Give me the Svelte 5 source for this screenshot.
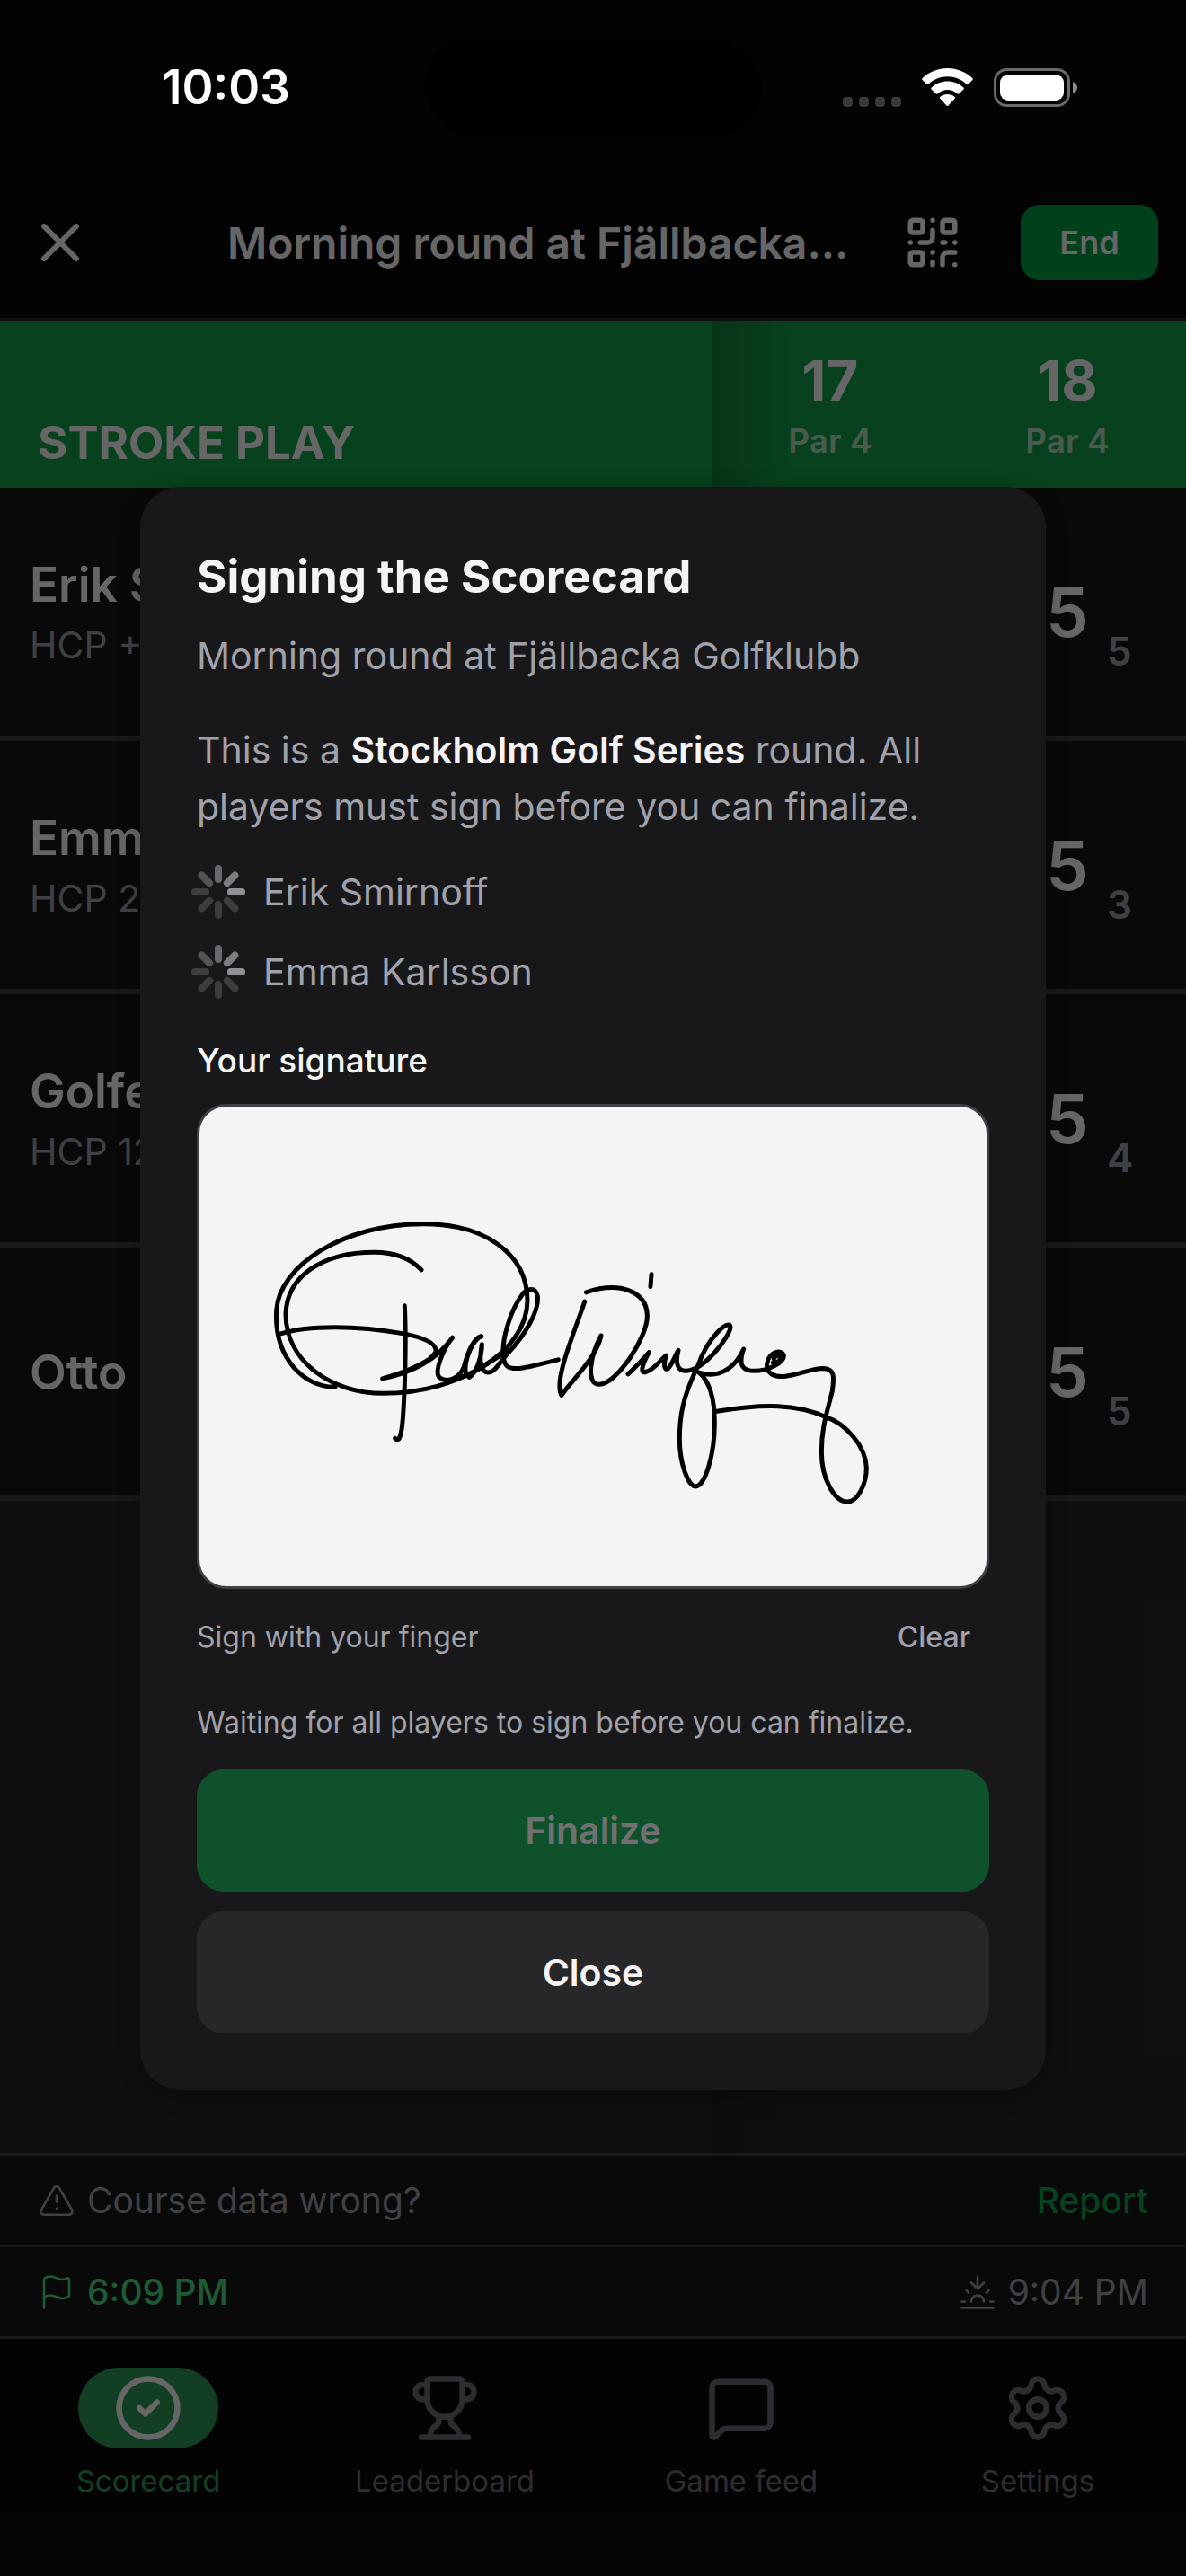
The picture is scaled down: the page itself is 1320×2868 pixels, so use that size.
<script>
const holes = [
    { number: 17, par: 4 },
    { number: 18, par: 4 }
];

const players = [
    { name: 'Erik Smirnoff', hcp: '+2', score: 5, points: 5 },
    { name: 'Emma Karlsson', hcp: '24', score: 5, points: 3 },
    { name: 'Golfer', hcp: '12', score: 5, points: 4 },
    { name: 'Otto', hcp: null, score: 5, points: 5 }
];

const tabs = [
    { id: 'scorecard', label: 'Scorecard' },
    { id: 'leaderboard', label: 'Leaderboard' },
    { id: 'feed', label: 'Game feed' },
    { id: 'settings', label: 'Settings' }
];

// spinner spokes, clockwise from the top
const spokes = ['#68686e', '#7c7c82', '#8f8f96', '#3d3d40', '#3d3d40', '#3d3d40', '#3d3d40', '#525257'];

let activeTab = $state('scorecard');
let dialogOpen = $state(true);
let signed = $state(true);

const waitingFor = ['Erik Smirnoff', 'Emma Karlsson'];
</script>

<div class="screen">
    <div class="status-bar">
        <span class="time">10:03</span>
        <span class="island"></span>
        <div class="status-icons">
            <span class="dots"><i></i><i></i><i></i><i></i></span>
            <svg class="wifi" viewBox="0 0 57 42">
                <path d="M28.5 0C39 0 49 4 56.3 11c.7.7.7 1.4.1 2L51.8 17.600c-.7.7-1.5.7-2.2.1C44 12.400 36.5 9.300 28.5 9.300S13 12.400 7.400 17.700c-.7.6-1.5.6-2.2-.1L.6 13c-.6-.6-.6-1.3.1-2C8 4 18 0 28.5 0Z" />
                <path d="M28.5 14.500c6.700 0 13 2.500 17.800 7 .7.7.7 1.400.1 2L41.500 28.200c-.7.7-1.500.7-2.200.1-3-2.700-6.800-4.200-10.800-4.200s-7.800 1.500-10.800 4.200c-.7.6-1.500.6-2.200-.1l-4.900-4.700c-.6-.6-.6-1.300.1-2 4.800-4.500 11.100-7 17.800-7Z" />
                <path d="M28.5 29c3 0 5.800 1 8 2.800.8.7.8 1.400.2 2l-7.200 7.600c-.6.7-1.400.7-2 0l-7.200-7.600c-.6-.6-.6-1.300.2-2C22.700 30 25.500 29 28.500 29Z" />
            </svg>
            <svg class="battery" viewBox="0 0 94 43">
                <rect x="1.5" y="1.5" width="82" height="40" rx="13" stroke="#6a6a6a" stroke-width="3" />
                <rect x="7" y="7" width="71" height="29" rx="9" fill="#fff" />
                <path d="M88 15c3 1 5 3.500 5 6.500s-2 5.500-5 6.500Z" fill="#8a8a8a" />
            </svg>
        </div>
    </div>

    <header class="top-bar">
        <button class="icon-button" aria-label="Leave round">
            <svg class="icon-close" viewBox="0 0 24 24"><path d="M18 6 6 18M6 6l12 12" /></svg>
        </button>
        <h1>Morning round at Fjällbacka...</h1>
        <button class="icon-button" aria-label="Show QR code">
            <svg class="icon-qr" viewBox="0 0 24 24">
                <rect width="5" height="5" x="3" y="3" rx="1" />
                <rect width="5" height="5" x="16" y="3" rx="1" />
                <rect width="5" height="5" x="3" y="16" rx="1" />
                <path d="M21 16h-3a2 2 0 0 0-2 2v3M21 21v.01M12 7v3a2 2 0 0 1-2 2H7M3 12h.01M12 3h.01M12 16v.01M16 12h1M21 12v.01M12 21v-1" />
            </svg>
        </button>
        <button class="end-button">End</button>
    </header>

    <main>
        <table>
            <thead>
                <tr>
                    <th class="format" scope="col">STROKE PLAY</th>
                    {#each holes as hole}
                        <th class="hole" scope="col">
                            <span class="hole-number">{hole.number}</span>
                            <span class="hole-par">Par {hole.par}</span>
                        </th>
                    {/each}
                </tr>
            </thead>
            <tbody>
                {#each players as player}
                    <tr>
                        <th class="player" scope="row">
                            <span class="player-name">{player.name}</span>
                            {#if player.hcp}
                                <span class="player-hcp">HCP {player.hcp}</span>
                            {/if}
                        </th>
                        <td></td>
                        <td>
                            <div class="score">
                                <span class="strokes">{player.score}</span>
                                <span class="points">{player.points}</span>
                            </div>
                        </td>
                    </tr>
                {/each}
            </tbody>
        </table>
        <div class="column-shadow"></div>
    </main>

    <div class="info-row">
        <span class="info-item">
            <svg viewBox="0 0 24 24"><path d="m21.73 18-8-14a2 2 0 0 0-3.48 0l-8 14A2 2 0 0 0 4 21h16a2 2 0 0 0 1.73-3M12 9v4M12 17h.01" /></svg>
            Course data wrong?
        </span>
        <a class="report" href="#report">Report</a>
    </div>
    <div class="info-row">
        <span class="info-item start">
            <svg viewBox="0 0 24 24"><path d="M4 22V4a1 1 0 0 1 .4-.8A6 6 0 0 1 8 2c3 0 5 2 7.333 2q2 0 3.067-.8A1 1 0 0 1 20 4v10a1 1 0 0 1-.4.8A6 6 0 0 1 16 16c-3 0-5-2-8-2a6 6 0 0 0-4 1.528" /></svg>
            6:09 PM
        </span>
        <span class="info-item">
            <svg viewBox="0 0 24 24"><path d="M12 10V2M4.93 10.93l1.41 1.41M2 18h2M20 18h2M19.07 10.93l-1.41 1.41M22 22H2M16 6l-4 4-4-4M16 18a4 4 0 0 0-8 0" /></svg>
            9:04 PM
        </span>
    </div>

    <nav>
        {#each tabs as tab}
            <button class="tab" class:active={activeTab === tab.id} onclick={() => (activeTab = tab.id)}>
                <span class="tab-icon">
                    <svg viewBox="0 0 24 24">
                        {#if tab.id === 'scorecard'}
                            <circle cx="12" cy="12" r="10" />
                            <path d="m9 12 2 2 4-4" />
                        {:else if tab.id === 'leaderboard'}
                            <path d="M10 14.66v1.626a2 2 0 0 1-.976 1.696A5 5 0 0 0 7 21.978M14 14.66v1.626a2 2 0 0 0 .976 1.696A5 5 0 0 1 17 21.978M18 9h1.5a2.5 2.5 0 0 0 0-5H18M4 22h16M6 9a6 6 0 0 0 12 0V3a1 1 0 0 0-1-1H7a1 1 0 0 0-1 1zM6 9H4.5a2.5 2.5 0 0 1 0-5H6" />
                        {:else if tab.id === 'feed'}
                            <path d="M22 17a2 2 0 0 1-2 2H6.828a2 2 0 0 0-1.414.586l-2.202 2.202A.71.71 0 0 1 2 21.286V5a2 2 0 0 1 2-2h16a2 2 0 0 1 2 2z" />
                        {:else}
                            <path d="M9.671 4.136a2.34 2.34 0 0 1 4.659 0 2.34 2.34 0 0 0 3.319 1.915 2.34 2.34 0 0 1 2.33 4.033 2.34 2.34 0 0 0 0 3.831 2.34 2.34 0 0 1-2.33 4.033 2.34 2.34 0 0 0-3.319 1.915 2.34 2.34 0 0 1-4.659 0 2.34 2.34 0 0 0-3.32-1.915 2.34 2.34 0 0 1-2.33-4.033 2.34 2.34 0 0 0 0-3.831A2.34 2.34 0 0 1 6.35 6.051a2.34 2.34 0 0 0 3.319-1.915" />
                            <circle cx="12" cy="12" r="3" />
                        {/if}
                    </svg>
                </span>
                {tab.label}
            </button>
        {/each}
    </nav>

    {#if dialogOpen}
        <div class="backdrop">
            <div class="dialog" role="dialog" aria-modal="true" aria-labelledby="dialog-title">
                <h2 id="dialog-title">Signing the Scorecard</h2>
                <p class="round-name">Morning round at Fjällbacka Golfklubb</p>
                <p class="intro">This is a <strong>Stockholm Golf Series</strong> round. All players must sign before you can finalize.</p>

                <ul>
                    {#each waitingFor as name}
                        <li>
                            <svg class="spinner" viewBox="-30 -30 60 60">
                                {#each spokes as color, i}
                                    <line x1="0" y1="-14" x2="0" y2="-26" stroke={color} transform="rotate({i * 45})" />
                                {/each}
                            </svg>
                            {name}
                        </li>
                    {/each}
                </ul>

                <h3>Your signature</h3>
                <div class="pad">
                    {#if signed}
                        <svg viewBox="37 64 2628 1495" preserveAspectRatio="none">
                            <path d="M490 938C390 940 285 850 294 700C302 560 520 430 780 430C985 428 1132 520 1132 670C1130 830 900 958 650 958C480 958 325 860 325 710C330 590 450 518 620 518C690 518 745 540 778 573" />
                            <path d="M308 772C400 745 560 745 720 772C790 785 830 803 826 828C815 855 740 888 648 912C760 890 830 850 882 784C850 820 820 890 838 908C870 930 908 905 920 875C930 840 950 785 978 780" />
                            <path d="M978 780C940 795 905 895 938 908C965 890 980 840 980 805C972 850 972 890 1000 893C1025 893 1040 860 1065 835C1125 775 1172 700 1166 655C1160 625 1130 630 1115 650C1075 700 1045 790 1052 845C1056 880 1075 882 1105 880C1150 876 1190 862 1235 853" />
                            <path d="M870 920C940 905 1000 865 1065 825M722 685C728 800 722 950 718 1010C714 1080 706 1115 690 1098" />
                            <g transform="translate(1170)">
                                <path d="M153 672C118 770 48 920 76 964C110 915 192 850 208 778C172 840 155 930 202 930C260 930 365 780 362 715C360 640 270 608 158 643" />
                                <path d="M376 587L373 625" />
                                <path d="M298 898C330 870 350 850 368 830C350 860 335 895 355 892C385 885 405 855 425 840C415 870 420 885 430 882C445 870 455 840 466 824C455 860 462 888 490 888C550 888 640 780 640 750C636 725 565 780 530 875C480 970 470 1030 470 1100C470 1180 500 1248 523 1248C555 1248 587 1150 587 1050C587 970 570 920 535 893C610 915 660 870 684 820C665 870 680 888 720 888C770 888 820 860 818 840C812 820 770 825 762 865C758 895 785 907 820 905C870 900 910 880 950 880C985 882 988 900 980 950C965 1010 944 1060 944 1140C944 1230 990 1296 1030 1296C1065 1296 1094 1240 1094 1190C1092 1120 1020 1050 960 1032C860 990 750 990 595 1014" />
                                <path d="M785 850C790 838 808 838 808 846C806 858 790 864 782 862" />
                            </g>
                        </svg>
                    {/if}
                </div>
                <div class="pad-footer">
                    <span>Sign with your finger</span>
                    <button class="clear" onclick={() => (signed = false)}>Clear</button>
                </div>

                <p class="waiting">Waiting for all players to sign before you can finalize.</p>
                <div class="actions">
                    <button class="finalize" disabled>Finalize</button>
                    <button class="close" onclick={() => (dialogOpen = false)}>Close</button>
                </div>
            </div>
        </div>
    {/if}
</div>

<style>
    :global(body) {
        margin: 0;
        background: #09090b;
    }
    .screen {
        position: relative;
        display: flex;
        flex-direction: column;
        min-height: 100vh;
        background: #09090b;
        color: #fff;
        font-family: Inter, "Liberation Sans", sans-serif;
        font-size: 41px;
    }
    h1, h2, h3, p, ul {
        margin: 0;
        padding: 0;
    }
    button {
        border: 0;
        padding: 0;
        background: none;
        color: inherit;
        font: inherit;
        cursor: pointer;
    }
    svg {
        display: block;
        flex: none;
        fill: none;
        stroke: currentColor;
        stroke-width: 2;
        stroke-linecap: round;
        stroke-linejoin: round;
    }

    /* status bar stays above the backdrop */
    .status-bar {
        position: relative;
        z-index: 2;
        display: grid;
        grid-template-columns: 1fr 374px 1fr;
        align-items: center;
        box-sizing: border-box;
        height: 186px;
        padding: 42px 0 34px;
    }
    .time {
        padding-left: 180px;
        font-size: 53px;
        font-weight: 600;
    }
    .island {
        height: 110px;
        border-radius: 55px;
        background: #000;
    }
    .status-icons {
        display: flex;
        justify-content: flex-end;
        align-items: center;
        gap: 23px;
        padding-right: 120px;
    }
    .status-icons svg {
        stroke: none;
    }
    .dots {
        display: flex;
        align-self: flex-end;
        gap: 7px;
    }
    .dots i {
        width: 11px;
        height: 11px;
        border-radius: 4px;
        background: #3a3a3a;
    }
    .wifi {
        width: 57px;
        height: 42px;
        fill: #fff;
    }
    .battery {
        width: 94px;
        height: 43px;
    }

    .top-bar {
        display: flex;
        align-items: center;
        height: 168px;
        padding: 0 31px;
        border-bottom: 3px solid #27272a;
    }
    .icon-close {
        width: 72px;
        height: 72px;
    }
    .icon-qr {
        width: 66px;
        height: 66px;
    }
    h1 {
        flex: 1;
        margin: 0 32px 0 150px;
        white-space: nowrap;
        font-size: 48px;
        font-weight: 600;
    }
    .end-button {
        width: 153px;
        height: 84px;
        margin-left: 65px;
        border-radius: 21px;
        background: #00a144;
        font-size: 36px;
        font-weight: 600;
    }

    main {
        position: relative;
        flex: 1;
        background: #27272a;
    }
    table {
        width: 100%;
        border-collapse: collapse;
        table-layout: fixed;
    }
    th, td {
        padding: 0;
        text-align: left;
        font-weight: 400;
    }
    thead tr {
        height: 186px;
        background: #16a34a;
    }
    .format {
        width: 60%;
        box-sizing: border-box;
        padding: 0 42px 20px;
        vertical-align: bottom;
        font-size: 51px;
        font-weight: 700;
    }
    .hole {
        padding-top: 10px;
        text-align: center;
    }
    .hole span {
        display: block;
    }
    .hole-number {
        font-size: 62px;
        line-height: 72px;
        font-weight: 700;
    }
    .hole-par {
        color: rgba(255, 255, 255, 0.7);
        font-size: 37px;
        line-height: 62px;
        font-weight: 600;
    }
    tbody tr {
        height: 282px;
        background: #18181b;
        box-shadow: inset 0 -6px #3f3f46;
    }
    .player {
        padding: 0 33px 4px;
    }
    .player span {
        display: block;
    }
    .player-name {
        font-size: 53px;
        line-height: 72px;
        font-weight: 600;
    }
    .player-hcp {
        color: #a1a1aa;
        line-height: 62px;
    }
    .score {
        display: grid;
        grid-template-columns: 1fr auto 1fr;
        align-items: center;
        gap: 20px;
        height: 132px;
        padding-bottom: 6px;
    }
    .strokes {
        grid-column: 2;
        font-size: 76px;
        line-height: 132px;
        font-weight: 600;
    }
    .points {
        align-self: end;
        color: #a1a1aa;
        font-size: 44px;
        line-height: 44px;
        font-weight: 600;
    }
    .column-shadow {
        position: absolute;
        top: 0;
        bottom: 0;
        left: 60%;
        width: 90px;
        background: linear-gradient(to right, rgba(0, 0, 0, 0.2), transparent);
    }

    .info-row {
        display: flex;
        justify-content: space-between;
        align-items: center;
        height: 99px;
        padding: 0 42px;
        border-top: 3px solid #3f3f46;
        background: #18181b;
        color: #a1a1aa;
        font-size: 39px;
    }
    .info-item {
        display: flex;
        align-items: center;
        gap: 13px;
    }
    .info-item svg {
        width: 42px;
        height: 42px;
        stroke-width: 1.5;
    }
    .start {
        color: #4ade80;
        font-weight: 500;
    }
    .report {
        color: #16a34a;
        font-weight: 500;
        text-decoration: none;
    }

    nav {
        display: grid;
        grid-template-columns: repeat(4, 1fr);
        box-sizing: border-box;
        height: 267px;
        padding-top: 32px;
        border-top: 3px solid #3f3f46;
    }
    .tab {
        display: flex;
        flex-direction: column;
        align-items: center;
        gap: 12px;
        color: #71717a;
        font-size: 33px;
        line-height: 48px;
    }
    .tab-icon {
        display: flex;
        justify-content: center;
        align-items: center;
        width: 156px;
        height: 90px;
        border-radius: 45px;
    }
    .tab-icon svg {
        width: 78px;
        height: 78px;
    }
    .active {
        color: #2f9e5a;
    }
    .active .tab-icon {
        background: #2f9e5a;
        color: #fff;
    }

    .backdrop {
        position: absolute;
        inset: 0;
        display: flex;
        justify-content: center;
        align-items: center;
        padding: 0 156px;
        background: rgba(0, 0, 0, 0.6);
    }
    .dialog {
        flex: 1;
        max-width: 1008px;
        box-sizing: border-box;
        padding: 63px;
        border-radius: 45px;
        background: #18181b;
        color: #a1a1aa;
        box-shadow: 0 6px 24px rgba(0, 0, 0, 0.25);
    }
    h2 {
        color: #f4f4f5;
        font-size: 51px;
        line-height: 73px;
        font-weight: 700;
    }
    .round-name {
        margin-top: 24px;
        line-height: 57px;
    }
    .intro {
        margin-top: 45px;
        line-height: 63px;
    }
    strong {
        color: #f4f4f5;
        font-weight: 600;
    }
    ul {
        display: grid;
        gap: 29px;
        margin-top: 33px;
        list-style: none;
    }
    li {
        display: flex;
        align-items: center;
        gap: 20px;
        height: 60px;
        margin-left: -6px;
    }
    .spinner {
        width: 60px;
        height: 60px;
        stroke-width: 8;
    }
    h3 {
        margin-top: 45px;
        color: #f4f4f5;
        font-size: 37px;
        line-height: 48px;
        font-weight: 500;
    }
    .pad {
        box-sizing: border-box;
        height: 540px;
        margin-top: 24px;
        border: 3px solid #3f3f46;
        border-radius: 33px;
        background: #f4f4f5;
        overflow: hidden;
    }
    .pad svg {
        width: 100%;
        height: 100%;
        color: #000;
        stroke-width: 5;
    }
    .pad path {
        vector-effect: non-scaling-stroke;
    }
    .pad-footer {
        display: flex;
        justify-content: space-between;
        align-items: center;
        height: 66px;
        margin-top: 21px;
        font-size: 32px;
    }
    .clear {
        height: 66px;
        padding: 0 21px;
        font-weight: 500;
    }
    .waiting {
        margin-top: 41px;
        font-size: 32px;
        line-height: 42px;
    }
    .actions {
        display: grid;
        gap: 22px;
        margin-top: 31px;
    }
    .actions button {
        height: 136px;
        border-radius: 30px;
        font-weight: 600;
    }
    .finalize {
        background: #0f512b;
        color: #707072;
    }
    .close {
        background: #27272a;
        color: #f4f4f5;
    }
</style>
